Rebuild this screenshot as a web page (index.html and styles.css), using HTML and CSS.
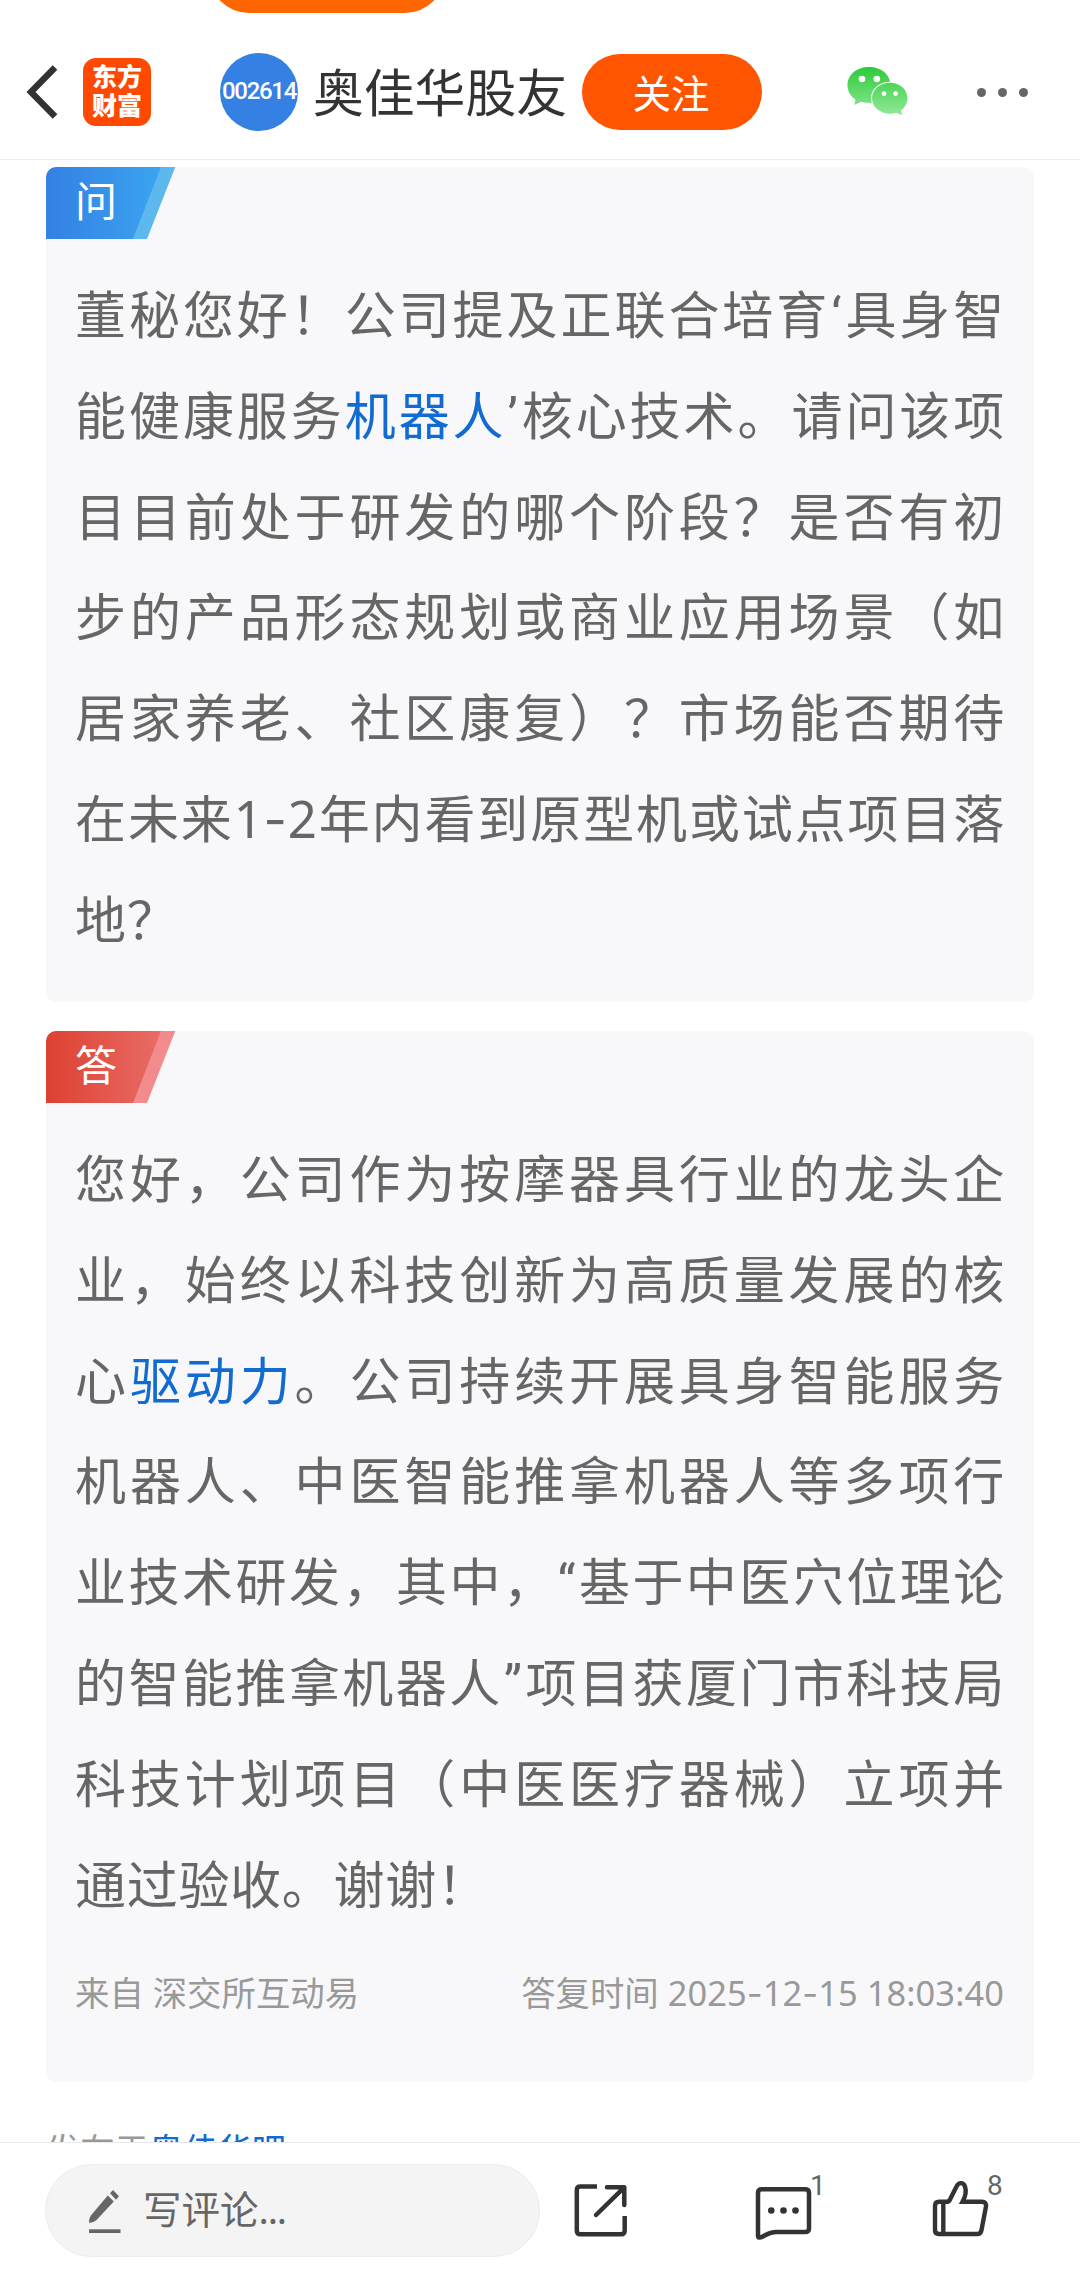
FILE: index.html
```html
<!DOCTYPE html>
<html lang="zh-CN">
<head>
<meta charset="utf-8">
<title>奥佳华股友</title>
<link rel="stylesheet" href="styles.css">
</head>
<body>
<div class="screen">
  <header class="topbar">
    <div class="top-pill"></div>
    <svg class="back" width="34" height="60" viewBox="0 0 34 60"><path d="M30 5.500 6 30l24 24.500" fill="none" stroke="#333" stroke-width="6.500" stroke-linejoin="miter"/></svg>
    <div class="logo">东方<br>财富</div>
    <div class="avatar">002614</div>
    <h1 class="title">奥佳华股友</h1>
    <button class="follow">关注</button>
    <svg class="wechat" width="62" height="50" viewBox="0 0 62 50">
      <defs><linearGradient id="wx" x1="0" y1="0" x2="0" y2="48" gradientUnits="userSpaceOnUse"><stop offset="0" stop-color="#2dcb38"/><stop offset="1" stop-color="#92e998"/></linearGradient></defs>
      <path d="M22 0C9.500 0 .500 8 .500 18.200c0 6 3 11 8 14.300L7.300 38l6.500-3.200c3 .900 5.500 1.100 8.700 1.100C35 35.800 43.500 28 43.500 18S34.500 0 22 0Z" fill="url(#wx)"/>
      <path d="M43 14.700c-10.600 0-19 7.400-19 16.600s8.400 16.600 19 16.600c2.200 0 4.500-.400 6.500-.900l7 3-1.200-5.600c4-3 6.700-8 6.700-13.100 0-9.200-8.400-16.600-19-16.600Z" fill="#fff"/>
      <path d="M43 15.800c-10 0-18 7-18 15.500s8 15.500 18 15.500c2.200 0 4.500-.300 6.500-1l5.500 2.400-1-4.800c4-2.900 6.500-7.300 6.500-12.100 0-8.500-7.500-15.500-17.500-15.500Z" fill="url(#wx)"/>
      <g fill="#fff"><circle cx="15" cy="12" r="3.300"/><circle cx="29.800" cy="12" r="3.300"/><circle cx="37" cy="26.600" r="2.400"/><circle cx="48.600" cy="26.600" r="2.400"/></g>
    </svg>
    <div class="more"><i></i><i></i><i></i></div>
  </header>

  <main class="content">
    <section class="card">
      <div class="tag"><svg class="tag-bg" width="130" height="72" viewBox="0 0 130 72">
        <defs><linearGradient id="ask"><stop offset="0" stop-color="#3480e3"/><stop offset="1" stop-color="#3ba4f0"/></linearGradient></defs>
        <path d="M100 0h29.300L101 72H80Z" fill="#5db8ee"/><path d="M0 0h115L87 72H0Z" fill="url(#ask)"/></svg><span>问</span></div>
      <div class="text">
        <p>董秘您好！公司提及正联合培育<span class="q">‘</span>具身智</p>
        <p>能健康服务<a>机器人</a><span class="q">’</span>核心技术。请问该项</p>
        <p>目目前处于研发的哪个阶段？是否有初</p>
        <p>步的产品形态规划或商业应用场景（如</p>
        <p>居家养老、社区康复）？市场能否期待</p>
        <p>在未来1<span class="dash">-</span>2年内看到原型机或试点项目落</p>
        <p class="last">地？</p>
      </div>
    </section>

    <section class="card answer">
      <div class="tag"><svg class="tag-bg" width="130" height="72" viewBox="0 0 130 72">
        <defs><linearGradient id="reply"><stop offset="0" stop-color="#de4031"/><stop offset="1" stop-color="#e86c66"/></linearGradient></defs>
        <path d="M100 0h29.300L101 72H80Z" fill="#f28b8b"/><path d="M0 0h115L87 72H0Z" fill="url(#reply)"/></svg><span>答</span></div>
      <div class="text">
        <p>您好，公司作为按摩器具行业的龙头企</p>
        <p>业，始终以科技创新为高质量发展的核</p>
        <p>心<a>驱动力</a>。公司持续开展具身智能服务</p>
        <p>机器人、中医智能推拿机器人等多项行</p>
        <p>业技术研发，其中，<span class="q">“</span>基于中医穴位理论</p>
        <p>的智能推拿机器人<span class="q">”</span>项目获厦门市科技局</p>
        <p>科技计划项目（中医医疗器械）立项并</p>
        <p class="last">通过验收。谢谢！</p>
      </div>
      <div class="meta"><span>来自 深交所互动易</span><span>答复时间 <span class="time">2025<span class="dash">-</span>12<span class="dash">-</span>15 18:03:40</span></span></div>
    </section>

    <div class="posted">发布于<a>奥佳华吧</a></div>
  </main>

  <footer class="bottombar">
    <div class="comment-box">
      <svg width="34" height="46" viewBox="0 0 34 46" fill="#666"><path d="M19.800 7.500 25.800 13.500 9 31.500C6.500 34 4 34.500 1.200 35 .800 32 1.500 29.500 3.500 26.800Z"/><path d="m22 5.300 3-3.300 6 6.300-3 3.500Z"/><rect x="1" y="41.300" width="31.500" height="3.700"/></svg>
      <span class="placeholder">写评论<span class="dots">...</span></span>
    </div>
    <div class="action">
      <svg width="60" height="60" viewBox="0 0 60 60" fill="none" stroke="#333" stroke-width="4.500"><path d="M26 6.500H9.500Q5.800 6.500 5.800 10V50.500Q5.800 54.300 9.500 54.300H50Q53.700 54.300 53.700 50.500V36"/><path d="M36 7.300H53.300V25M53 7.600 25 35" stroke-linecap="round" stroke-linejoin="round"/></svg>
    </div>
    <div class="action">
      <svg width="64" height="64" viewBox="0 0 64 64" fill="none" stroke="#333" stroke-width="4.500" stroke-linejoin="round"><path d="M10 9.300H53Q57 9.300 57 13V48.500Q57 52 53 52H24C15 52 12.500 57.200 7.200 57.500Q6 57.500 6 55.500V13Q6 9.300 10 9.300Z"/><g fill="#333" stroke="none"><circle cx="19.300" cy="30.500" r="3.300"/><circle cx="31.500" cy="30.500" r="3.300"/><circle cx="43.500" cy="30.500" r="3.300"/></g></svg>
      <span class="count">1</span>
    </div>
    <div class="action">
      <svg width="64" height="64" viewBox="0 0 64 64" fill="none" stroke="#333" stroke-width="4.400"><path d="M14.300 25V57M10 24.800H17.500Q20 24.800 21 22.500L27.500 9.500C29.500 5 34.500 5 36 9.500C37.500 14 37 18.500 33.500 24.800H53Q57.500 24.800 57 29.500L52.500 53Q51.800 57 48.500 57H10Q6 57 6 53V29Q6 24.800 10 24.800Z"/></svg>
      <span class="count">8</span>
    </div>
  </footer>
</div>
</body>
</html>
```
FILE: styles.css
```css
* { box-sizing: border-box; }
body {
  margin: 0;
  background: #fff;
  color: #666;
  font-family: "Noto Sans", "Noto Sans CJK SC", sans-serif;
  text-spacing-trim: space-all;
}
a { color: #126bd0; }
p, h1 { margin: 0; }
svg { display: block; flex: none; }

.screen {
  width: 1080px;
  height: 2278px;
  display: flex;
  flex-direction: column;
  overflow: hidden;
}

/* top bar */
.topbar {
  position: relative;
  flex: none;
  height: 160px;
  padding: 25px 52px 0 25px;
  display: flex;
  align-items: center;
  border-bottom: 1px solid #ececec;
  overflow: hidden;
}
.top-pill {
  position: absolute;
  left: 209px;
  top: -67px;
  width: 236px;
  height: 80px;
  border-radius: 40px;
  background: #ff6600;
}
.logo {
  width: 68px;
  height: 68px;
  margin-left: 24px;
  padding-top: 3px;
  border-radius: 13px;
  background: #ff4800;
  color: #fff;
  font: 900 25px/29px "Noto Sans CJK SC", sans-serif;
  text-align: center;
}
.avatar {
  width: 78px;
  height: 78px;
  margin-left: 69px;
  border-radius: 50%;
  background: #3480e3;
  color: #fff;
  font: 500 24px/76px Roboto, sans-serif;
  letter-spacing: -1.3px;
  display: flex;
  justify-content: center;
}
.title {
  margin-left: 15px;
  padding-bottom: 4px;
  color: #333;
  font: 400 50.8px/76px "Noto Sans CJK SC", sans-serif;
  white-space: nowrap;
}
.follow {
  width: 180px;
  height: 76px;
  margin-left: 15px;
  padding: 0 2px 2px 0;
  border: 0;
  border-radius: 38px;
  background: #ff5500;
  color: #fff;
  font: 400 38.5px/72px "Noto Sans CJK SC", sans-serif;
}
.wechat { margin-left: 85px; }
.more {
  margin-left: auto;
  display: flex;
  gap: 12px;
}
.more i {
  width: 9px;
  height: 9px;
  border-radius: 50%;
  background: #666;
}

/* question and answer */
.content {
  flex: 1;
  min-height: 0;
  padding: 7px 46px 0;
  overflow: hidden;
}
.card {
  height: 835px;
  border-radius: 10px;
  background: #f8f8fa;
  overflow: hidden;
}
.card.answer {
  height: 1051px;
  margin-top: 29px;
}
.tag {
  display: grid;
  width: 130px;
  height: 72px;
  color: #fff;
  font: 400 42px/64px "Noto Sans CJK SC", sans-serif;
}
.tag > * { grid-area: 1 / 1; }
.tag span { padding-left: 29px; z-index: 1; }
.text {
  padding: 25px 29px 0;
  font-size: 51px;
  letter-spacing: .7px;
  line-height: 100.8px;
}
.text p {
  height: 100.8px;
  text-align: justify;
  text-align-last: justify;
  white-space: nowrap;
}
.text p.last { text-align-last: left; }
.q { padding: 0 1px; font-family: Roboto, sans-serif; }
.dash { font-family: Inter, sans-serif; }
.meta {
  display: flex;
  justify-content: space-between;
  padding: 32px 30px 0 29px;
  color: #999;
  font-size: 34.4px;
  line-height: 54px;
}
.time { letter-spacing: .1px; }
.posted {
  margin-top: 46px;
  color: #999;
  font-size: 34.3px;
  line-height: 44px;
}

/* bottom bar */
.bottombar {
  flex: none;
  height: 136px;
  padding: 21px 0 0 45px;
  border-top: 1px solid #e8e8e8;
  background: #fff;
  display: grid;
  grid-template-columns: 526px 181px 177px 150px;
}
.comment-box {
  width: 495px;
  height: 93px;
  padding-left: 42px;
  border: 1px solid #ececec;
  border-radius: 47px;
  background: #f4f4f4;
  display: flex;
  align-items: center;
  gap: 21px;
  font-size: 38.5px;
  line-height: 80px;
}
.placeholder { padding-bottom: 3px; }
.dots { letter-spacing: -1.2px; }
.action {
  position: relative;
  height: 93px;
  padding-top: 16px;
}
.action:nth-child(4) { padding-top: 13px; }
.count {
  position: absolute;
  left: 58px;
  top: 5px;
  font: 400 28px/33px Roboto, sans-serif;
}
```
